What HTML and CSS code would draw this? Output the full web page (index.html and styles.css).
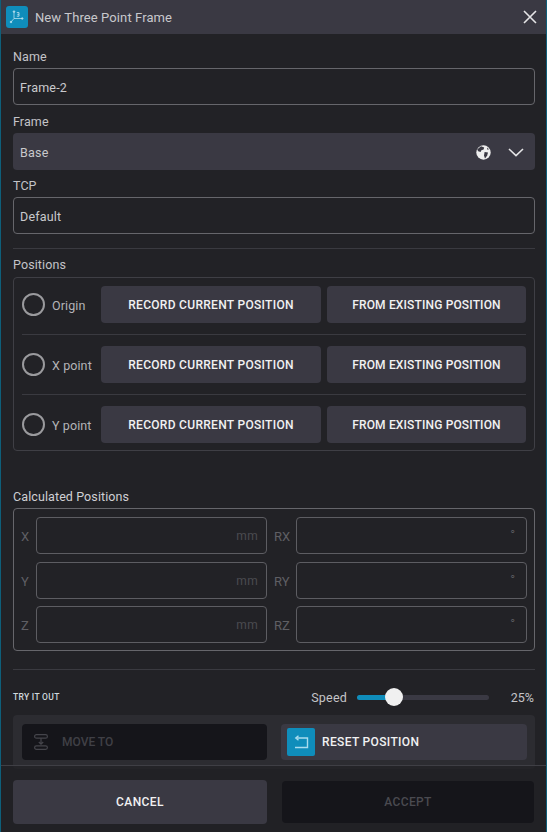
FILE: index.html
```html
<!DOCTYPE html>
<html lang="en">
<head>
    <meta charset="UTF-8">
    <meta name="viewport" content="width=device-width, initial-scale=1.0">
    <title>New Three Point Frame</title>
    <link rel="stylesheet" href="styles.css">
</head>
<body>
    <div class="dialog">
        <header class="title-bar">
            <span class="title-icon">
                <svg width="16" height="16" viewBox="0 0 16 16" fill="none" stroke="#b5dfee" stroke-width="0.8">
                    <path d="M5 3V9.5L2 13M5 9.5H13"/>
                    <circle cx="5" cy="2.6" r="0.8" fill="#b5dfee"/>
                    <circle cx="13.2" cy="9.5" r="0.8" fill="#b5dfee"/>
                    <circle cx="2" cy="13" r="0.8" fill="#b5dfee"/>
                    <path d="M7.8 3.6H10V5.4H8.4M10 5.4V7.2H7.8" stroke-width="0.9"/>
                </svg>
            </span>
            <span class="title-text">New Three Point Frame</span>
            <svg class="close-icon" width="14" height="14" viewBox="0 0 14 14" fill="none" stroke="#e4e4e6" stroke-width="1.6">
                <path d="M1 1L13 13M13 1L1 13"/>
            </svg>
        </header>

        <main class="content">
            <label class="field-label">Name</label>
            <div class="text-field">Frame-2</div>

            <label class="field-label">Frame</label>
            <div class="select-field">
                <span>Base</span>
                <svg class="globe-icon" width="15" height="15" viewBox="0 0 15 15">
                    <circle cx="7.5" cy="7.5" r="7.2" fill="#eeeeee"/>
                    <path d="M5 1.2L8.2 2.4L7.6 4.4L5.4 5.2L4.6 7L2.2 6.2L1.2 4.6Z" fill="#3a3943"/>
                    <path d="M8.6 7L12 7.4L11.2 10.4L9 13.6L8 10.4Z" fill="#3a3943"/>
                    <path d="M11 2.4L13 4.2L11.4 4.8Z" fill="#3a3943"/>
                </svg>
                <svg class="chevron-icon" width="16" height="9" viewBox="0 0 16 9" fill="none" stroke="#e4e4e6" stroke-width="1.6">
                    <path d="M1 1L8 7.6L15 1"/>
                </svg>
            </div>

            <label class="field-label">TCP</label>
            <div class="text-field">Default</div>

            <hr class="divider divider-top">

            <label class="field-label">Positions</label>
            <section class="positions-box">
                <div class="position-row">
                    <span class="radio"></span>
                    <span class="position-name">Origin</span>
                    <button class="btn btn-record">RECORD CURRENT POSITION</button>
                    <button class="btn btn-existing">FROM EXISTING POSITION</button>
                </div>
                <div class="position-row">
                    <span class="radio"></span>
                    <span class="position-name">X point</span>
                    <button class="btn btn-record">RECORD CURRENT POSITION</button>
                    <button class="btn btn-existing">FROM EXISTING POSITION</button>
                </div>
                <div class="position-row">
                    <span class="radio"></span>
                    <span class="position-name">Y point</span>
                    <button class="btn btn-record">RECORD CURRENT POSITION</button>
                    <button class="btn btn-existing">FROM EXISTING POSITION</button>
                </div>
            </section>

            <label class="field-label calc-label">Calculated Positions</label>
            <section class="calc-box">
                <span class="axis">X</span>
                <div class="calc-input"><span class="unit">mm</span></div>
                <span class="axis">RX</span>
                <div class="calc-input"><span class="unit-deg">°</span></div>
                <span class="axis">Y</span>
                <div class="calc-input"><span class="unit">mm</span></div>
                <span class="axis">RY</span>
                <div class="calc-input"><span class="unit-deg">°</span></div>
                <span class="axis">Z</span>
                <div class="calc-input"><span class="unit">mm</span></div>
                <span class="axis">RZ</span>
                <div class="calc-input"><span class="unit-deg">°</span></div>
            </section>

            <hr class="divider divider-bottom">

            <div class="try-row">
                <span class="try-label">TRY IT OUT</span>
                <span class="speed-label">Speed</span>
                <div class="slider">
                    <div class="slider-fill"></div>
                    <div class="slider-thumb"></div>
                </div>
                <span class="speed-value">25%</span>
            </div>

            <section class="try-panel">
                <button class="btn-move">
                    <svg width="14" height="16" viewBox="0 0 14 16" fill="none" stroke="#45454b" stroke-width="1.2">
                        <rect x="0.6" y="0.6" width="12.8" height="3.6" rx="1.8"/>
                        <rect x="0.6" y="11.8" width="12.8" height="3.6" rx="1.8"/>
                        <path d="M7 4V10M4.8 8L7 10.2L9.2 8"/>
                    </svg>
                    <span>MOVE TO</span>
                </button>
                <button class="btn-reset">
                    <span class="reset-icon">
                        <svg width="16" height="14" viewBox="0 0 16 14" fill="none" stroke="#a9dcee" stroke-width="1.4">
                            <path d="M4 3H14.5V12.5H2"/>
                            <path d="M5.5 0.8L2.8 3L5.5 5.2"/>
                        </svg>
                    </span>
                    <span>RESET POSITION</span>
                </button>
            </section>
        </main>

        <footer class="footer">
            <button class="btn-cancel">CANCEL</button>
            <button class="btn-accept">ACCEPT</button>
        </footer>
    </div>
</body>
</html>
```

FILE: styles.css
```css
* {
    box-sizing: border-box;
}

html, body {
    margin: 0;
    padding: 0;
}

body {
    font-family: Roboto, "Liberation Sans", sans-serif;
    background-color: #222226;
    color: #c9c9cc;
}

.dialog {
    position: relative;
    width: 547px;
    height: 832px;
    overflow: hidden;
    background-color: #222226;
    border-left: 1px solid #0e5f7a;
    border-right: 1px solid #0e5f7a;
}

.title-bar {
    display: flex;
    align-items: center;
    height: 34px;
    padding: 0 9px 0 5px;
    background-color: #3a3943;
}

.title-icon {
    display: flex;
    align-items: center;
    justify-content: center;
    width: 22px;
    height: 22px;
    border-radius: 3px;
    background-color: #0f8dbb;
}

.title-text {
    margin-left: 7px;
    font-size: 13px;
    letter-spacing: 0.1px;
    color: #c8c8cc;
}

.close-icon {
    margin-left: auto;
}

.content {
    padding: 0 11px 0 12px;
}

.field-label {
    display: block;
    height: 17px;
    font-size: 12.5px;
    line-height: 17px;
    letter-spacing: 0.1px;
    color: #c4c4c8;
}

.content > .field-label:first-child {
    margin-top: 14px;
}

.text-field, .select-field {
    display: flex;
    align-items: center;
    height: 37px;
    margin: 3px 0 8px;
    padding: 1px 8px 0 6px;
    border-radius: 4px;
    font-size: 12.5px;
    letter-spacing: 0.2px;
    color: #c9c9cc;
}

.text-field {
    border: 1px solid #66666b;
}

.select-field {
    margin-bottom: 7px;
    padding: 1px 11px 0 7px;
    background-color: #3a3943;
}

.globe-icon {
    margin-left: auto;
}

.chevron-icon {
    margin-left: 17px;
}

.divider {
    height: 1px;
    margin: 0;
    border: none;
    background-color: #3a3a40;
}

.divider-top {
    margin: 14px 0 7px;
}

.positions-box {
    height: 174px;
    margin-top: 4px;
    padding: 8px 8px 0;
    border: 1px solid #3f3f45;
    border-radius: 4px;
}

.position-row {
    display: flex;
    align-items: flex-start;
    height: 49px;
    margin-bottom: 11px;
    border-bottom: 1px solid #3a3a40;
}

.position-row:last-child {
    border-bottom: none;
}

.radio {
    flex: none;
    width: 23px;
    height: 23px;
    margin-top: 7px;
    border: 2px solid #9a9a9d;
    border-radius: 50%;
}

.position-name {
    flex: none;
    width: 49px;
    margin: 12px 0 0 7px;
    font-size: 12.5px;
    letter-spacing: 0.1px;
    color: #b4b4b8;
}

.btn {
    height: 37px;
    border: none;
    border-radius: 4px;
    background-color: #3a3943;
    color: #f1f1f2;
    font-family: inherit;
    font-size: 12px;
    font-weight: 500;
}

.btn-record {
    width: 220px;
    letter-spacing: 0.3px;
}

.btn-existing {
    width: 199px;
    margin-left: 6px;
    letter-spacing: 0.15px;
}

.calc-label {
    margin-top: 37px;
    color: #d0d0d4;
}

.calc-box {
    display: grid;
    grid-template-columns: 22px 231px 29px 231px;
    grid-template-rows: 45px 44px 37px;
    height: 143px;
    margin-top: 3px;
    padding: 8px 8px 0 0;
    border: 1px solid #66666b;
    border-radius: 4px;
}

.axis {
    display: flex;
    align-items: center;
    height: 37px;
    padding: 1px 0 0 7px;
    font-size: 13px;
    color: #5f5f64;
    white-space: nowrap;
}

.calc-input {
    display: flex;
    align-items: center;
    justify-content: flex-end;
    height: 37px;
    padding-right: 8px;
    border: 1px solid #5d5d62;
    border-radius: 4px;
}

.unit {
    font-size: 12px;
    letter-spacing: 0.3px;
    color: #4b4b50;
}

.unit-deg {
    align-self: flex-start;
    margin: 9px 3px 0 0;
    font-size: 13px;
    line-height: 15px;
    color: #5a5a5f;
}

.divider-bottom {
    margin-top: 18px;
}

.try-row {
    display: flex;
    align-items: center;
    height: 20px;
    margin-top: 17px;
}

.try-label {
    font-size: 8.5px;
    font-weight: 500;
    letter-spacing: 0.3px;
    color: #d0d8dd;
}

.speed-label {
    margin-left: auto;
    font-size: 12.5px;
    letter-spacing: 0.2px;
    color: #c4c4c8;
}

.slider {
    position: relative;
    width: 132px;
    height: 5px;
    margin-left: 10px;
    border-radius: 3px;
    background-color: #3a3943;
}

.slider-fill {
    width: 37px;
    height: 5px;
    border-radius: 3px 0 0 3px;
    background-color: #0f8dbb;
}

.slider-thumb {
    position: absolute;
    top: -7px;
    left: 28px;
    width: 18px;
    height: 18px;
    border-radius: 50%;
    background-color: #f0f0f0;
}

.speed-value {
    width: 46px;
    padding-right: 1px;
    font-size: 12.5px;
    text-align: right;
    color: #c4c4c8;
}

.try-panel {
    display: flex;
    justify-content: space-between;
    height: 54px;
    margin-top: 8px;
    padding: 9px 8px 0 9px;
    border-radius: 4px;
    background-color: #2c2c31;
}

.btn-move, .btn-reset {
    display: flex;
    align-items: center;
    height: 36px;
    border: none;
    border-radius: 4px;
    font-family: inherit;
    font-size: 12px;
    font-weight: 500;
}

.btn-move {
    width: 245px;
    padding: 0 0 0 12px;
    background-color: #15151a;
    color: #404046;
}

.btn-move span {
    margin-left: 14px;
}

.btn-reset {
    width: 246px;
    padding: 0 0 0 6px;
    background-color: #3a3943;
    color: #f1f1f2;
    letter-spacing: 0.35px;
}

.reset-icon {
    display: flex;
    align-items: center;
    justify-content: center;
    width: 28px;
    height: 28px;
    margin-right: 7px;
    border-radius: 2px;
    background-color: #0f8dbb;
}

.footer {
    position: absolute;
    left: 0;
    right: 0;
    bottom: 0;
    display: flex;
    justify-content: space-between;
    height: 67px;
    padding: 14px 12px 0;
    border-top: 1px solid #3f3f45;
    background-color: rgba(34, 34, 38, 0.75);
}

.btn-cancel, .btn-accept {
    width: 254px;
    height: 44px;
    border: none;
    border-radius: 4px;
    font-family: inherit;
    font-size: 12px;
    font-weight: 500;
    letter-spacing: 0.4px;
}

.btn-cancel {
    background-color: #3a3943;
    color: #f1f1f2;
}

.btn-accept {
    width: 252px;
    height: 42px;
    margin-top: 1px;
    background-color: #15151a;
    color: #4a4a50;
}
```
